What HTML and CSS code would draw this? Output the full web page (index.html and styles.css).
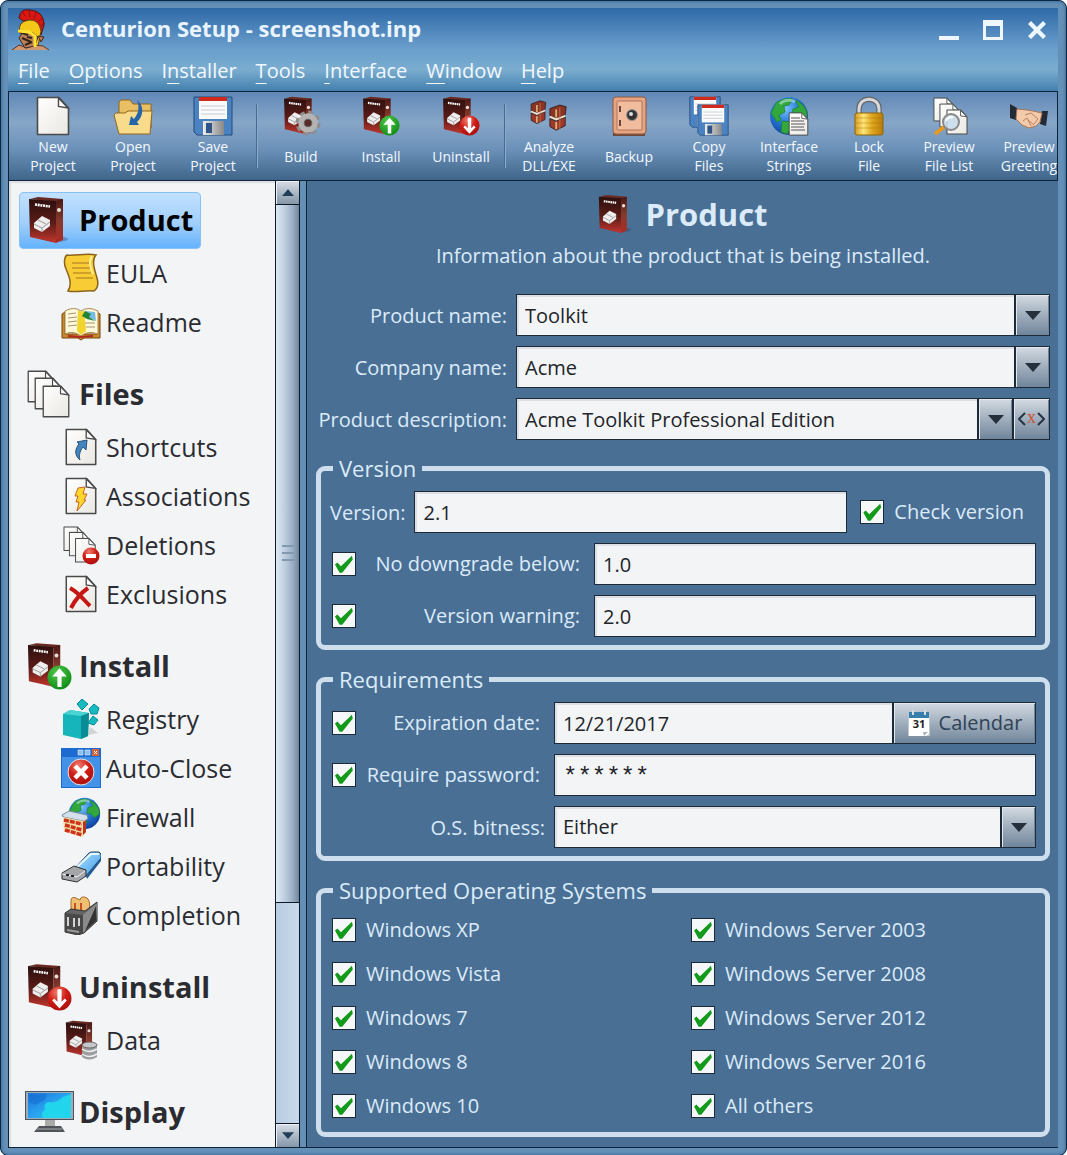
FILE: index.html
```html
<!DOCTYPE html>
<html lang="en">
<head>
<meta charset="utf-8">
<meta name="viewport" content="width=device-width, initial-scale=1">
<title>Centurion Setup - screenshot.inp</title>
<link rel="stylesheet" href="styles.css">
</head>
<body>
<svg class="defs" width="0" height="0" aria-hidden="true">
  <defs>
    <linearGradient id="g-box" x1="0" y1="0" x2="0" y2="1"><stop offset="0" stop-color="#2c100e"/><stop offset=".55" stop-color="#5c1c17"/><stop offset="1" stop-color="#c2362e"/></linearGradient>
    <linearGradient id="g-side" x1="0" y1="0" x2="0" y2="1"><stop offset="0" stop-color="#4a1714"/><stop offset=".5" stop-color="#873a2c"/><stop offset="1" stop-color="#b02a24"/></linearGradient>
    <linearGradient id="g-page" x1="0" y1="0" x2="1" y2="1"><stop offset="0" stop-color="#fff"/><stop offset="1" stop-color="#e9e7e1"/></linearGradient>
    <linearGradient id="g-gold" x1="0" x2="1"><stop offset="0" stop-color="#d99a1c"/><stop offset=".3" stop-color="#ffe67a"/><stop offset=".6" stop-color="#e0a81e"/><stop offset="1" stop-color="#b87c08"/></linearGradient>
    <linearGradient id="g-steel" x1="0" x2="1"><stop offset="0" stop-color="#eee"/><stop offset="1" stop-color="#888"/></linearGradient>
    <radialGradient id="g-green" cx=".4" cy=".3" r=".8"><stop offset="0" stop-color="#4fc94a"/><stop offset="1" stop-color="#088510"/></radialGradient>
    <radialGradient id="g-red" cx=".4" cy=".25" r=".8"><stop offset="0" stop-color="#f08070"/><stop offset=".5" stop-color="#cf1d15"/><stop offset="1" stop-color="#a80e0a"/></radialGradient>
    <radialGradient id="g-sea" cx=".4" cy=".3" r=".75"><stop offset="0" stop-color="#7cc4ff"/><stop offset=".5" stop-color="#2478d8"/><stop offset="1" stop-color="#0c3b96"/></radialGradient>
    <linearGradient id="g-screen" x1="0" y1="0" x2="1" y2="1"><stop offset="0" stop-color="#1a74d8"/><stop offset=".5" stop-color="#29a2ef"/><stop offset="1" stop-color="#24d6ea"/></linearGradient>
    <linearGradient id="g-usb" x1="0" y1="0" x2="1" y2="1"><stop offset="0" stop-color="#b5e4ff"/><stop offset="1" stop-color="#3a9ae8"/></linearGradient>
  </defs>

  <symbol id="box" viewBox="0 0 40 48">
    <ellipse cx="28" cy="43" rx="12" ry="3" fill="#24466a" opacity=".35"/>
    <path d="M2 3 10 1 35 3 34 5 28 6z" fill="#6a2a22"/>
    <path d="M1 3 28 5V47L2 41z" fill="url(#g-box)"/>
    <path d="M28 5 35 3V44L28 47z" fill="url(#g-side)"/>
    <path d="M7 8.500 22 10.500" stroke="#fff" stroke-width="2.600" stroke-dasharray="2 .7"/>
    <path d="M6 27 14 20 22 24 22 30 14 36 6 32z" fill="#eee"/>
    <path d="M6 28 14 32 22 26M10 24l8 4M14 32v4" stroke="#999" fill="none"/>
    <circle cx="31" cy="14" r="2" fill="#e9e2dc"/>
  </symbol>
  <symbol id="up" viewBox="0 0 24 24"><circle cx="12" cy="12" r="11.500" fill="url(#g-green)"/><path d="M12 3 19 11H14V21H10V11H5z" fill="#fff"/></symbol>
  <symbol id="down" viewBox="0 0 24 24"><circle cx="12" cy="12" r="11.500" fill="url(#g-red)"/><path d="M12 21.500 5 14l2-2 3 3V3h4v12l3-3 2 2z" fill="#fff"/></symbol>
  <symbol id="gear" viewBox="0 0 24 24"><circle cx="12" cy="12" r="9.500" fill="none" stroke="#8d8d8d" stroke-width="4" stroke-dasharray="4.200 3.260"/><circle cx="12" cy="12" r="6" fill="none" stroke="#b5b3b1" stroke-width="6"/><circle cx="12" cy="12" r="3.500" fill="#5a2b2b" stroke="#666"/></symbol>
  <symbol id="page" viewBox="0 0 34 40"><path d="M1.500 1.500H23L32.500 12V38.500H1.500z" fill="url(#g-page)" stroke="#4a4a4a" stroke-width="1.600" stroke-linejoin="round"/><path d="M22.500 2V10.500L32 12z" fill="#fff" stroke="#4a4a4a" stroke-width="1.400"/></symbol>
  <symbol id="pages" viewBox="0 0 44 48"><use href="#page" x="0" y="0" width="28" height="33"/><use href="#page" x="7" y="7" width="28" height="33"/><use href="#page" x="15" y="15" width="28" height="33"/></symbol>
  <symbol id="folder" viewBox="0 0 40 40"><path d="M6 34V6l2-2h9l3 4h18V32z" fill="#e8bf63" stroke="#93671c"/><path d="M1 19 3 17H12l3-2H39L37 38H6z" fill="#f9dc8b" stroke="#93671c"/><path d="M24 4C31 9 31 20 24 26L26 29 16 29 18 20 21 23C25 18 27 12 24 4z" fill="#2465ab"/></symbol>
  <symbol id="floppy" viewBox="0 0 40 40"><path d="M1 1H39V39H4L1 36z" fill="#4b83c2" stroke="#234a78"/><path d="M6 1H34V23H6z" fill="#fafafa"/><path d="M6 1H34V5H6z" fill="#d02a1d"/><path d="M8 10H32M8 14H32M8 18H32" stroke="#c4cbd4"/><path d="M10 25H31V39H10z" fill="url(#g-steel)"/><path d="M13 27H19V37H13z" fill="#2e5585"/></symbol>
  <symbol id="floppies" viewBox="0 0 40 40"><use href="#floppy" width="32" height="32"/><use href="#floppy" x="8" y="8" width="32" height="32"/></symbol>
  <symbol id="books" viewBox="0 0 20 32">
    <path d="M1 5 12 1 19 3 18 12 8 16 1 13z" fill="#8c3424" stroke="#31201f"/><path d="M1 16 8 19 18 14 18 24 8 29 1 25z" fill="#9f3927" stroke="#31201f"/><path d="M8 6V15M8 20V28" stroke="#d9b47b" stroke-width="2"/><path d="M1 14 8 17 18 13" stroke="#f2e4cf" stroke-width="2" fill="none"/><path d="M12 4V28" stroke="#cc7150"/></symbol>
  <symbol id="analyze" viewBox="0 0 40 40"><use href="#books" x="1" y="4" width="17" height="26"/><use href="#books" x="20" y="8" width="18" height="29"/></symbol>
  <symbol id="safe" viewBox="0 0 40 40"><path d="M4 37H36V40H4z" fill="#6e4939"/><rect x="4" y="1" width="33" height="37" rx="3" fill="#e5a583" stroke="#8e563e"/><rect x="8" y="5" width="25" height="29" rx="1" fill="#f2bd9e" stroke="#b2755a"/><circle cx="23" cy="19" r="5.500" fill="#333" stroke="#999"/><circle cx="22" cy="18" r="2" fill="#ddd"/><path d="M11 10v6M11 24v6" stroke="#68463b" stroke-width="2"/></symbol>
  <symbol id="globe" viewBox="0 0 40 40"><circle cx="20" cy="20" r="19" fill="url(#g-sea)"/><path d="M7 7C14 2 21 2 24 3L20 9 15 10 16 16 10 19 12 24 8 26 2 17zM26 4C34 7 39 14 38 21L32 25 27 20 23 20 24 13 30 11zM13 25 21 26 23 31 18 38 12 36z" fill="#32a83c" stroke="#1b7c2b" stroke-width=".7"/><path d="M11 8C14 4 22 3 26 6" stroke="#d6f0ff" stroke-width="3" opacity=".5" fill="none"/></symbol>
  <symbol id="strings" viewBox="0 0 40 40"><use href="#globe" width="40" height="40"/><use href="#page" x="19" y="16" width="21" height="24"/><path d="M22 22h9M22 25h13M22 28h14M22 31h13M22 34h14" stroke="#555"/></symbol>
  <symbol id="lock" viewBox="0 0 40 40"><path d="M10 19V13C10 0 30 0 30 13V19" fill="none" stroke="#666" stroke-width="5.500"/><path d="M10 19V13C10 0 30 0 30 13V19" fill="none" stroke="#d5d8dd" stroke-width="3"/><rect x="6" y="17" width="28" height="22" rx="2" fill="url(#g-gold)" stroke="#8b6410"/><path d="M7 22H33M7 27H33M7 32H33" stroke="#a56f08" opacity=".4"/></symbol>
  <symbol id="preview" viewBox="0 0 40 40"><use href="#page" x="4" y="0" width="21" height="27"/><use href="#page" x="10" y="6" width="21" height="27"/><use href="#page" x="17" y="12" width="22" height="28"/><path d="M15 31 6 38" stroke="#e69922" stroke-width="4"/><circle cx="22" cy="26" r="8" fill="#c6daeb" fill-opacity=".85" stroke="#888" stroke-width="2"/><path d="M17 25c1-3 4-4 7-4" stroke="#fff" stroke-width="2" fill="none"/></symbol>
  <symbol id="hands" viewBox="0 0 40 40"><path d="M1 8 8 12 7 24 1 22z" fill="#242b35"/><path d="M39 15 33 15 31 28 37 30z" fill="#242b35"/><path d="M8 13 18 14 24 15 33 17 31 26 27 30 20 32 13 29 7 23z" fill="#f3cbab" stroke="#a87458"/><path d="M16 19 22 17 29 23 25 28M14 25l4-3 4 8M19 24l6 5" fill="none" stroke="#b98163"/></symbol>
  <symbol id="scroll" viewBox="0 0 40 40"><path d="M6 2C14 3 26 0 35 2 30 7 34 18 36 25 38 32 36 36 33 38 23 37 15 40 7 38 11 32 9 25 5 16 2 9 4 3 6 2z" fill="#f8cc35" stroke="#8a641c" stroke-width="1.500"/><path d="M11 10H29M11 15H29M12 20H30M15 25H32" stroke="#a6761c"/><path d="M31 3C27 9 30 16 32 21" stroke="#ffed9d" stroke-width="2" fill="none"/></symbol>
  <symbol id="book" viewBox="0 0 40 40"><path d="M1 12 4 10V32H36V10L39 12V36H23L20 38 17 36H1z" fill="#c98a2b" stroke="#76470d"/><path d="M4 9Q13 4 20 9 27 4 37 9V32Q27 28 20 34 12 28 4 32z" fill="#fff8d9" stroke="#a88a55"/><path d="M17 8Q20 11 23 8L25 29 20 33 16 29z" fill="#f2d42e"/><path d="M7 12 15 11M7 16 16 15M7 20 16 19M7 24 16 23M24 21 34 21M25 25 34 25" stroke="#a59577"/><path d="M24 9 34 10 35 19 29 16 24 15z" fill="#75bce5"/><path d="M21 14 24 9 30 12 28 15 34 19 26 17z" fill="#238438"/><path d="M7 34 19 35 32 34" stroke="#b12920" stroke-width="2" fill="none"/></symbol>
  <symbol id="shortcut" viewBox="0 0 40 40"><use href="#page" x="3" y="1" width="34" height="38"/><path d="M16 15 26 13 25 23 22 20C18 25 18 30 19 33 13 28 14 22 18 17z" fill="#4484bf" stroke="#28547f"/></symbol>
  <symbol id="assoc" viewBox="0 0 40 40"><use href="#page" x="3" y="1" width="34" height="38"/><path d="M17 12 24 11 22 18 26 18 23 24 25 24 16 35 18 26 15 26 17 20 14 20z" fill="#ffd72c" stroke="#c5642a"/></symbol>
  <symbol id="deletions" viewBox="0 0 40 40"><use href="#pages" x="2" y="1" width="34" height="37"/><circle cx="30" cy="31" r="8.500" fill="url(#g-red)"/><rect x="25" y="29" width="10" height="4" fill="#fff"/></symbol>
  <symbol id="exclusions" viewBox="0 0 40 40"><use href="#page" x="3" y="1" width="34" height="38"/><path d="M9 14C18 19 22 25 29 32M27 14C20 19 14 26 10 34" stroke="#c51713" stroke-width="4" fill="none"/></symbol>
  <symbol id="registry" viewBox="0 0 40 40"><path d="M27 36 37 34 29 28z" fill="#888" opacity=".3"/><path d="M2 15 9 11 28 14 27 37 20 40 2 36z" fill="#15b5bb"/><path d="M2 15 20 17 28 14 9 11z" fill="#4bd2d3"/><path d="M20 17 28 14 27 37 20 40z" fill="#0a8c94"/><path d="M21 0 27 5 21 11 16 5zM33 5 38 9 36 15 30 15 28 10zM32 17 37 21 33 26 27 24z" fill="#18b9bf" stroke="#078b94"/></symbol>
  <symbol id="autoclose" viewBox="0 0 40 40"><rect width="40" height="40" fill="#1d6bd0"/><rect x="1" y="9" width="38" height="30" fill="#4293e8"/><path d="M17 2h5v5h-5zM24 2h5v5h-5z" fill="#8abdf0" stroke="#fff" stroke-width=".5"/><path d="M31 1h7v7h-7z" fill="#d4643c"/><path d="m33 3 3 3m0-3-3 3" stroke="#fff"/><circle cx="20" cy="24" r="13" fill="url(#g-red)" stroke="#dfe5ed" stroke-width="1"/><path d="m14 18 12 12m0-12L14 30" stroke="#fff" stroke-width="4.500"/></symbol>
  <symbol id="firewall" viewBox="0 0 40 40"><use href="#globe" x="7" y="0" width="33" height="33"/><path d="M1 18 8 14 26 18 27 22 22 24 2 20z" fill="#d3dfec" stroke="#7689a0"/><path d="M2 20 22 24 25 22 25 36 21 40 3 34z" fill="#f0dda4"/><path d="M3 23 21 27M4 28 21 33M4 33 21 38" stroke="#cf321b" stroke-width="3.500" stroke-dasharray="5 1"/><path d="M22 25 25 23V35L22 38z" fill="#b93521"/></symbol>
  <symbol id="usb" viewBox="0 0 40 40"><path d="M14 22 28 7Q29 6 31 6H38Q41 7 40 12L24 31z" fill="url(#g-usb)" stroke="#203b5b"/><path d="M25 30 40 12V15L26 33z" fill="#1f5c98"/><path d="M16 21 30 8 38 8" stroke="#e5faff" stroke-width="2" fill="none"/><path d="M1 27 13 20 25 24V30L16 36 1 33z" fill="#a4a6aa" stroke="#333"/><path d="M1 28 16 31 24 25" stroke="#eee" fill="none"/><path d="M5 29h3M10 30h3" stroke="#222" stroke-width="2"/></symbol>
  <symbol id="toaster" viewBox="0 0 40 40"><path d="M10 16V6Q10 1 15 3L19 5Q20 0 26 3 30 6 28 17z" fill="#eec072" stroke="#a96b2b"/><path d="M14 8V16M20 8V17" stroke="#ce4c24" stroke-width="2"/><path d="M4 18 10 14 24 16 36 7V26L23 38 17 40 4 37z" fill="#666" stroke="#333"/><path d="M4 18 22 20V38L17 40 4 37z" fill="#484848"/><path d="M22 20 36 8 35 26 22 38z" fill="#8a8a8a"/><path d="M24 36 35 11v15z" fill="#333"/><path d="M7 22v9M13 23v9M18 23v8" stroke="#d3d3d3" stroke-width="2"/><path d="M6 35 18 37" stroke="#999" stroke-width="2"/></symbol>
  <symbol id="data" viewBox="0 0 40 40"><use href="#box" x="4" y="0" width="31" height="37"/><path d="M21 25V37Q28 42 36 37V25z" fill="#9b9da1"/><path d="M21 29Q28 34 36 29M21 34Q28 39 36 34" stroke="#eee" stroke-width="1.500" fill="none"/><ellipse cx="28.500" cy="25" rx="7.500" ry="3" fill="#c5c7ca" stroke="#666"/></symbol>
  <symbol id="monitor" viewBox="0 0 50 48"><path d="M20 32H30V39H20z" fill="#aaa"/><path d="M14 38H36L40 44H9z" fill="#50545a"/><path d="M12 41H37" stroke="#a7adb2"/><rect x="0" y="3" width="49" height="29" fill="#4a5460"/><rect x="1" y="4" width="47" height="27" fill="#a3acb5"/><rect x="3" y="5" width="43" height="25" fill="url(#g-screen)"/><path d="M18 30Q15 24 20 22 18 16 23 14 31 16 38 9L46 6V30z" fill="#20d5ec"/><path d="M4 7 22 6 20 12 10 17 4 14z" fill="#176dd0" opacity=".6"/></symbol>
  <symbol id="centurion" viewBox="0 0 40 42"><path d="M9 9Q10-1 20 1 34 2 34 16L31 26 27 17Q24 9 13 12z" fill="#d91713" stroke="#4c1813"/><path d="M15 7 12 2M20 8 19 1M24 10 26 3M27 14 33 8M29 18 35 14" stroke="#94120f"/><path d="M10 23Q7 13 19 11 29 10 31 22L28 37 22 38 23 28 17 24z" fill="#f4c71b" stroke="#68440c"/><path d="M2 41 9 36 17 39 24 36 33 37 39 41" fill="#cf9872" stroke="#5b3426"/><path d="M13 23 23 24 28 28 25 37 15 39 12 34 9 29z" fill="#bd8057" stroke="#402a21"/><path d="M9 23 18 26M12 29 21 33M17 28 22 29M15 36 22 33" stroke="#342518" stroke-width="2"/><path d="M28 27 34 28 31 33z" fill="#ba794f" stroke="#402a21"/><path d="M8 22 19 23 25 27 25 38" fill="none" stroke="#ffe232" stroke-width="3"/></symbol>
  <symbol id="arrow-down" viewBox="0 0 16 9"><path d="M0 0H16L8 9z"/></symbol>
  <symbol id="arrow-up" viewBox="0 0 16 9"><path d="M0 9H16L8 0z"/></symbol>
</svg>

<div class="window">
  <header class="titlebar">
    <svg class="app-icon"><use href="#centurion"/></svg>
    <div class="window-title">Centurion Setup - screenshot.inp</div>
    <div class="window-buttons">
      <button type="button" aria-label="Minimize"><svg viewBox="0 0 20 20"><path d="M0 16H20V20H0z"/></svg></button>
      <button type="button" aria-label="Maximize"><svg viewBox="0 0 20 20"><path fill-rule="evenodd" d="M0 0H20V20H0zM3 6V17H17V6z"/></svg></button>
      <button type="button" aria-label="Close"><svg viewBox="0 0 20 20"><path d="M4 1 10 7 16 1 19 4 13 10 19 16 16 19 10 13 4 19 1 16 7 10 1 4z"/></svg></button>
    </div>
  </header>
  <nav class="menubar" aria-label="Menu">
    <a href="#"><u>F</u>ile</a><a href="#"><u>O</u>ptions</a><a href="#">I<u>n</u>staller</a><a href="#"><u>T</u>ools</a><a href="#"><u>I</u>nterface</a><a href="#"><u>W</u>indow</a><a href="#"><u>H</u>elp</a>
  </nav>
  <div class="toolbar" role="toolbar" aria-label="Tools">
    <button type="button"><svg viewBox="0 0 40 40"><use href="#page" x="3" width="34" height="40"/></svg><span>New<br>Project</span></button>
    <button type="button"><svg><use href="#folder"/></svg><span>Open<br>Project</span></button>
    <button type="button"><svg><use href="#floppy"/></svg><span>Save<br>Project</span></button>
    <i class="separator"></i>
    <button type="button"><svg viewBox="0 0 40 40"><use href="#box" x="2" width="33" height="39"/><use href="#gear" x="14" y="14" width="26" height="26"/></svg><span>Build</span></button>
    <button type="button"><svg viewBox="0 0 40 40"><use href="#box" x="1" width="33" height="39"/><use href="#up" x="18" y="19" width="21" height="21"/></svg><span>Install</span></button>
    <button type="button"><svg viewBox="0 0 40 40"><use href="#box" x="1" width="33" height="39"/><use href="#down" x="18" y="19" width="21" height="21"/></svg><span>Uninstall</span></button>
    <i class="separator"></i>
    <button type="button"><svg><use href="#analyze"/></svg><span>Analyze<br>DLL/EXE</span></button>
    <button type="button"><svg><use href="#safe"/></svg><span>Backup</span></button>
    <button type="button"><svg><use href="#floppies"/></svg><span>Copy<br>Files</span></button>
    <button type="button"><svg><use href="#strings"/></svg><span>Interface<br>Strings</span></button>
    <button type="button"><svg><use href="#lock"/></svg><span>Lock<br>File</span></button>
    <button type="button"><svg><use href="#preview"/></svg><span>Preview<br>File List</span></button>
    <button type="button"><svg><use href="#hands"/></svg><span>Preview<br>Greeting</span></button>
  </div>

  <div class="content">
    <nav class="sidebar" aria-label="Sections">
      <section>
        <a class="group selected" href="#"><svg viewBox="0 0 50 48"><use href="#box" x="3" width="40" height="48"/></svg>Product</a>
        <a class="entry" href="#"><svg><use href="#scroll"/></svg>EULA</a>
        <a class="entry" href="#"><svg><use href="#book"/></svg>Readme</a>
      </section>
      <section>
        <a class="group" href="#"><svg viewBox="0 0 50 48"><use href="#pages" x="1" width="46" height="48"/></svg>Files</a>
        <a class="entry" href="#"><svg><use href="#shortcut"/></svg>Shortcuts</a>
        <a class="entry" href="#"><svg><use href="#assoc"/></svg>Associations</a>
        <a class="entry" href="#"><svg><use href="#deletions"/></svg>Deletions</a>
        <a class="entry" href="#"><svg><use href="#exclusions"/></svg>Exclusions</a>
      </section>
      <section>
        <a class="group" href="#"><svg viewBox="0 0 50 48"><use href="#box" x="2" width="38" height="46"/><use href="#up" x="22" y="23" width="25" height="25"/></svg>Install</a>
        <a class="entry" href="#"><svg><use href="#registry"/></svg>Registry</a>
        <a class="entry" href="#"><svg><use href="#autoclose"/></svg>Auto-Close</a>
        <a class="entry" href="#"><svg><use href="#firewall"/></svg>Firewall</a>
        <a class="entry" href="#"><svg><use href="#usb"/></svg>Portability</a>
        <a class="entry" href="#"><svg><use href="#toaster"/></svg>Completion</a>
      </section>
      <section>
        <a class="group" href="#"><svg viewBox="0 0 50 48"><use href="#box" x="2" width="38" height="46"/><use href="#down" x="22" y="23" width="25" height="25"/></svg>Uninstall</a>
        <a class="entry" href="#"><svg><use href="#data"/></svg>Data</a>
      </section>
      <section>
        <a class="group" href="#"><svg><use href="#monitor"/></svg>Display</a>
      </section>
    </nav>
    <div class="scrollbar">
      <button type="button" aria-label="Scroll up"><svg><use href="#arrow-up"/></svg></button>
      <div class="thumb"><i></i><i></i><i></i></div>
      <div class="track"></div>
      <button type="button" aria-label="Scroll down"><svg><use href="#arrow-down"/></svg></button>
    </div>
    <div class="splitter"></div>

    <main class="panel">
      <div class="heading"><svg><use href="#box"/></svg><h1>Product</h1></div>
      <p class="intro">Information about the product that is being installed.</p>
      <form>
        <div class="row">
          <label class="caption name" for="product">Product name:</label>
          <div class="field"><input id="product" type="text" value="Toolkit"><button class="arrow" type="button" aria-label="Product name list"><svg><use href="#arrow-down"/></svg></button></div>
        </div>
        <div class="row">
          <label class="caption name" for="company">Company name:</label>
          <div class="field"><input id="company" type="text" value="Acme"><button class="arrow" type="button" aria-label="Company name list"><svg><use href="#arrow-down"/></svg></button></div>
        </div>
        <div class="row">
          <label class="caption name" for="description">Product description:</label>
          <div class="field"><input id="description" type="text" value="Acme Toolkit Professional Edition"><button class="arrow" type="button" aria-label="Description list"><svg><use href="#arrow-down"/></svg></button><button class="variable" type="button" aria-label="Insert variable"><svg viewBox="0 0 8 14"><path d="M7 1 1 7 7 13"/></svg><b>x</b><svg viewBox="0 0 8 14"><path d="M1 1 7 7 1 13"/></svg></button></div>
        </div>

        <fieldset>
          <legend>Version</legend>
          <div class="row">
            <label class="caption" for="version">Version:</label>
            <div class="field"><input id="version" type="text" value="2.1"></div>
            <label class="check version-check"><input type="checkbox" checked>Check version</label>
          </div>
          <div class="row">
            <label class="check option wide"><input type="checkbox" checked><span>No downgrade below:</span></label>
            <div class="field"><input type="text" value="1.0" aria-label="No downgrade below"></div>
          </div>
          <div class="row">
            <label class="check option wide"><input type="checkbox" checked><span>Version warning:</span></label>
            <div class="field"><input type="text" value="2.0" aria-label="Version warning"></div>
          </div>
        </fieldset>

        <fieldset>
          <legend>Requirements</legend>
          <div class="row">
            <label class="check option"><input type="checkbox" checked><span>Expiration date:</span></label>
            <div class="field"><input type="text" value="12/21/2017" aria-label="Expiration date"><button class="calendar" type="button"><svg viewBox="0 0 24 28"><path d="M1 4H23V27H1z" fill="#c0c6cb"/><path d="M2 4H22V25L19 27H2z" fill="#fff"/><path d="M2 3H22V9H2z" fill="#367eac"/><path d="M6 1V6M18 1V6" stroke="#ddd" stroke-width="2"/><path d="M16 23H21L17 27z" fill="#adb5bd"/><text x="12" y="19" text-anchor="middle">31</text></svg>Calendar</button></div>
          </div>
          <div class="row">
            <label class="check option"><input type="checkbox" checked><span>Require password:</span></label>
            <div class="field"><input class="secret" type="text" value="******" aria-label="Password" autocomplete="off"></div>
          </div>
          <div class="row">
            <label class="caption bitness" for="bitness">O.S. bitness:</label>
            <div class="field select"><select id="bitness"><option>Either</option><option>32-bit</option><option>64-bit</option></select><span class="arrow"><svg><use href="#arrow-down"/></svg></span></div>
          </div>
        </fieldset>

        <fieldset class="systems">
          <legend>Supported Operating Systems</legend>
          <div class="systems-grid">
            <label class="check"><input type="checkbox" checked>Windows XP</label>
            <label class="check"><input type="checkbox" checked>Windows Server 2003</label>
            <label class="check"><input type="checkbox" checked>Windows Vista</label>
            <label class="check"><input type="checkbox" checked>Windows Server 2008</label>
            <label class="check"><input type="checkbox" checked>Windows 7</label>
            <label class="check"><input type="checkbox" checked>Windows Server 2012</label>
            <label class="check"><input type="checkbox" checked>Windows 8</label>
            <label class="check"><input type="checkbox" checked>Windows Server 2016</label>
            <label class="check"><input type="checkbox" checked>Windows 10</label>
            <label class="check"><input type="checkbox" checked>All others</label>
          </div>
        </fieldset>
      </form>
    </main>
  </div>
</div>
</body>
</html>
```

FILE: styles.css
```css
* { box-sizing: border-box; }

body {
  margin: 0;
  background: #fff;
  font: 20px/28px "Open Sans", "Noto Sans", sans-serif;
  color: #dcebfa;
}

button, input, select { font: inherit; color: inherit; margin: 0; }
button { padding: 0; border: 0; background: none; }
a { color: inherit; text-decoration: none; }
svg { flex: none; }
.defs { position: absolute; }

.window {
  display: flex;
  flex-direction: column;
  min-height: 100vh;
  padding: 7px 8px 7px 7px;
  border: 1px solid #0b2740;
  border-radius: 8px;
  background: #6490b8;
  box-shadow: inset 0 0 3px 1px #41709c;
}

.titlebar {
  display: flex;
  align-items: center;
  height: 44px;
  padding: 0 11px 0 2px;
  background: linear-gradient(#2f69a8, #6fa3cf);
}
.app-icon { width: 40px; height: 42px; }
.window-title { flex: 1; padding: 0 0 4px 11px; font-size: 22px; font-weight: 700; color: #eaf4ff; }
.window-buttons { display: flex; gap: 24px; }
.window-buttons button { display: flex; }
.window-buttons svg { width: 20px; height: 20px; fill: #eef6ff; }

.menubar {
  display: flex;
  gap: 19px;
  height: 39px;
  padding: 5px 10px;
  background: linear-gradient(#69a0cc, #7badcf 45%, #4380ae);
  color: #f2f8ff;
}
.menubar u { text-underline-offset: 5px; text-decoration-thickness: 1px; }

.toolbar {
  display: flex;
  height: 90px;
  padding: 4px;
  overflow: hidden;
  border: 1px solid #0d2338;
  background: linear-gradient(#6189b7, #87a6c8 35%, #6b91b8 65%, #3f658b);
}
.toolbar button { flex: 0 0 80px; display: flex; flex-direction: column; align-items: center; color: #f2f8ff; font-size: 14px; line-height: 19px; }
.toolbar svg { width: 40px; height: 40px; }
.toolbar span { display: flex; align-items: center; height: 40px; }
.separator { flex: 0 0 2px; height: 64px; margin: 8px 3px; border-left: 1px solid #466b92; border-right: 1px solid #8cabcb; }

.content { flex: 1; display: flex; border: solid #0d2338; border-width: 0 0 1px 1px; }

.sidebar {
  flex: 0 0 266px;
  display: flex;
  flex-direction: column;
  gap: 19px;
  padding: 11px 0 6px 10px;
  background: #f3f4f6;
  box-shadow: inset 2px 2px 1px #dcdfe3;
  color: #2a2c31;
}
.sidebar section { display: flex; flex-direction: column; align-items: flex-start; }
.group, .entry { display: flex; align-items: center; }
.group { gap: 4px; height: 57px; padding: 0 8px 2px 6px; border-radius: 5px; font-size: 29px; font-weight: 700; }
.group svg { width: 50px; height: 48px; }
.selected { background: linear-gradient(#c3e1ff, #a0cffc 55%, #62b1fc); box-shadow: inset 0 0 0 1px #8ac2f8; color: #000; }
.entry { gap: 5px; height: 49px; padding: 0 0 2px 42px; font-size: 25px; }
.entry svg { width: 40px; height: 40px; }

.scrollbar { flex: 0 0 25px; display: flex; flex-direction: column; border: 1px solid #0d1a26; border-width: 0 1px; background: #c6d6e8; }
.scrollbar button { display: grid; place-items: center; height: 24px; border: 1px solid #0d1a26; border-width: 0 0 1px; background: linear-gradient(#d7dee6, #8496a9); box-shadow: inset 1px 1px #eef2f6; }
.scrollbar button:last-child { border-width: 1px 0 0; }
.scrollbar svg { width: 12px; height: 7px; fill: #223e59; }
.thumb { flex: 76; display: flex; flex-direction: column; align-items: center; justify-content: center; gap: 5px; border-bottom: 1px solid #0d1a26; background: linear-gradient(90deg, #dfe9f4, #bccddf 40%, #98abc0 75%, #70869c); }
.thumb i { width: 12px; height: 2px; background: #8399ae; }
.track { flex: 24; background: linear-gradient(90deg, #b7cce2, #c9d9ea); }
.splitter { flex: 0 0 7px; border-right: 1px solid #0d2338; background: #6490b8; }

.panel { flex: 1; min-width: 0; padding: 13px 8px 10px 9px; background: #496f94; }
.heading { display: flex; align-items: center; justify-content: center; gap: 14px; height: 40px; }
.heading svg { width: 33px; height: 40px; }
h1 { margin: 0; font-size: 31px; line-height: 40px; color: #dcebfa; }
.intro { margin: 8px 0 24px; text-align: center; }

form { display: flex; flex-direction: column; }
.row { display: flex; align-items: center; margin-bottom: 10px; }
.caption { flex: none; padding: 2px 9px 0 0; text-align: right; }
.name { width: 200px; }
.bitness { width: 224px; }
.field { flex: 1; display: flex; min-width: 0; }
.field input, select {
  flex: 1;
  min-width: 0;
  width: 100%;
  height: 42px;
  padding: 0 8px;
  border: 1px solid #1d2b39;
  border-radius: 0;
  outline: 0;
  background: #f3f4f6;
  box-shadow: inset 2px 2px #dcdfe4;
  color: #222429;
}
.field .secret { padding-top: 4px; font-family: "Liberation Mono", monospace; font-size: 24px; }
.field button, .arrow {
  display: flex;
  align-items: center;
  justify-content: center;
  height: 42px;
  border: 1px solid #1d2b39;
  border-left-width: 2px;
  background: linear-gradient(#d3dae2, #a0aebd 50%, #71869b);
  box-shadow: inset 1px 1px #e3e8ed, inset -1px -1px #71869b;
  color: #2f4356;
}
.field button { margin-left: -1px; }
.field .arrow { width: 36px; }
.arrow svg { width: 16px; height: 9px; fill: #25303c; }
.field .variable { gap: 1px; width: 38px; }
.variable svg { width: 8px; height: 14px; fill: none; stroke: #263445; stroke-width: 2; }
.variable b { padding-bottom: 4px; font: 18px/20px "Liberation Serif", serif; color: #c95535; }
.field .calendar { width: 144px; gap: 8px; }
.calendar svg { width: 24px; height: 28px; }
.calendar text { font: bold 11px "Open Sans", sans-serif; fill: #222; }

.select { display: grid; grid-template-columns: 1fr 36px; }
.select select { grid-area: 1 / 1 / 2 / 3; appearance: none; }
.select .arrow { grid-area: 1 / 2; pointer-events: none; }

fieldset { min-width: 0; margin: 4px 0 11px; padding: 9px 9px 0; border: 5px solid #cfdeed; border-radius: 9px; }
fieldset .row:last-child { margin-bottom: 8px; }
legend { margin-left: 3px; padding: 0 6px; font-size: 22px; }

.check { display: flex; align-items: center; gap: 10px; }
.version-check { padding: 0 12px 0 13px; }
.option { flex: 0 0 224px; padding: 0 14px 0 2px; }
.wide { flex-basis: 264px; }
.option span { flex: 1; text-align: right; white-space: nowrap; }
.check input {
  flex: none;
  appearance: none;
  width: 24px;
  height: 24px;
  border: 1px solid #1b2a38;
  background: #f5f7f9;
}
.check input:checked::before {
  content: "";
  display: block;
  width: 22px;
  height: 22px;
  background: #149a1b;
  clip-path: polygon(9% 52%, 20% 43%, 36% 60%, 86% 12%, 90% 30%, 42% 90%, 30% 90%);
}

.systems { margin-bottom: 0; padding: 4px 9px 4px 11px; }
.systems legend { margin-left: 1px; }
.systems-grid { display: grid; grid-template-columns: 51fr 49fr; grid-auto-rows: 44px; }
```
